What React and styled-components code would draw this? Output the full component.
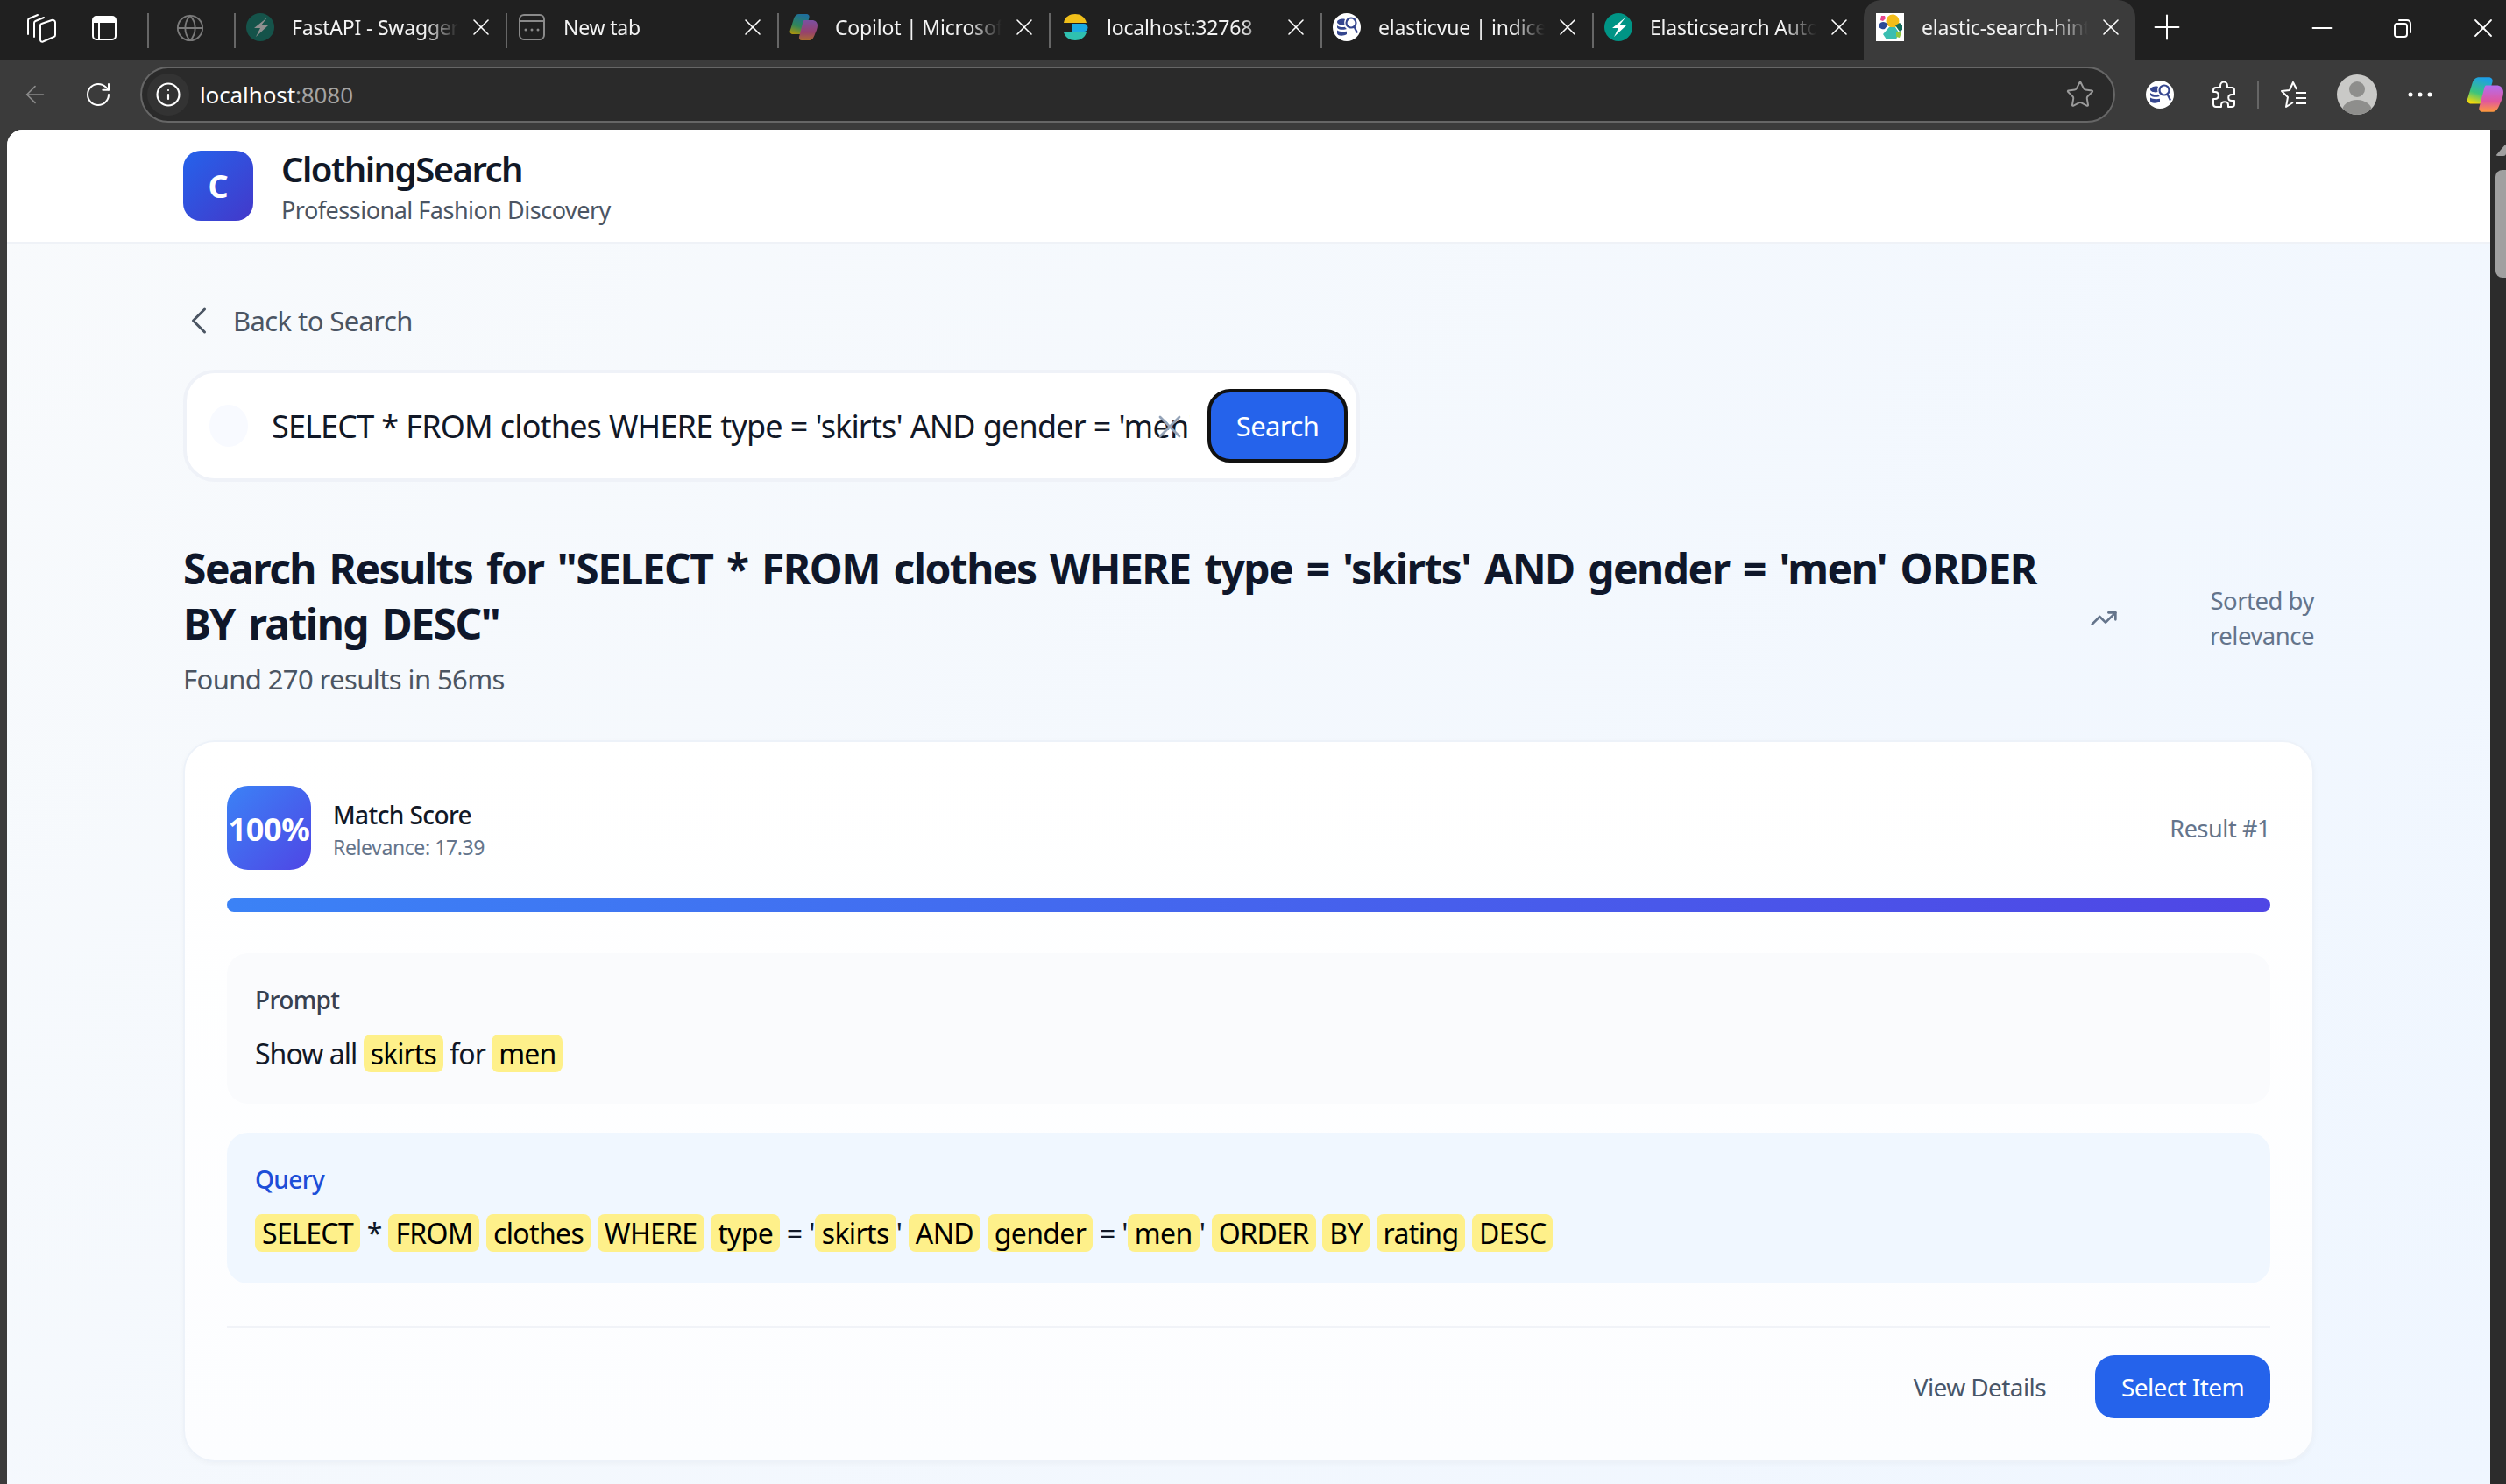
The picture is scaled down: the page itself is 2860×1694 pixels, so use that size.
import React from 'react';
import styled, { createGlobalStyle } from 'styled-components';
import { ArrowLeft, ChevronLeft, Globe, Info, Minus, Plus, RotateCw, Star, TrendingUp, X } from 'lucide-react';

const GlobalStyle = createGlobalStyle`
  html, body {
    margin: 0;
    padding: 0;
    background: #202020;
  }
  * {
    box-sizing: border-box;
  }
`;

const Shell = styled.div`
  width: 2860px;
  height: 1694px;
  overflow: hidden;
  display: flex;
  flex-direction: column;
  font-family: "Noto Sans", "Open Sans", sans-serif;
  background: #3b3b3b;
`;

/* browser tab strip */
const TabStrip = styled.div`
  height: 68px;
  flex: none;
  display: flex;
  align-items: stretch;
  padding-left: 11px;
  background: #202020;
`;

const StripSlot = styled.div`
  width: ${props => props.$width || 72}px;
  margin-right: ${props => props.$trail || 0}px;
  display: flex;
  align-items: center;
  justify-content: center;
  padding-bottom: 4px;
  color: ${props => props.$color || '#fff'};
`;

const StripDivider = styled.div`
  width: 2px;
  height: 40px;
  margin: 15px 0 0 13px;
  background: #666;
`;

const Tab = styled.div`
  position: relative;
  flex: none;
  width: 310px;
  display: flex;
  align-items: center;
  padding: 0 0 6px 14px;
  color: #f2f2f2;
  font-size: 23px;
  letter-spacing: -0.2px;
  background: ${props => (props.$active ? '#3b3b3b' : 'transparent')};
  border-radius: ${props => (props.$active ? '20px 20px 0 0' : '0')};

  &:first-of-type {
    width: 312px;
  }

  &::before {
    content: '';
    display: ${props => (props.$active ? 'none' : 'block')};
    position: absolute;
    left: 0;
    top: 15px;
    width: 2px;
    height: 40px;
    background: #666;
  }
`;

const TabIcon = styled.span`
  width: 32px;
  height: 32px;
  flex: none;
  display: flex;
`;

const TabTitle = styled.span`
  width: 190px;
  margin-left: 20px;
  flex: none;
  overflow: hidden;
  white-space: nowrap;
  -webkit-mask-image: linear-gradient(90deg, #000 80%, transparent 100%);
  mask-image: linear-gradient(90deg, #000 80%, transparent 100%);
`;

const TabClose = styled.span`
  display: flex;
  margin-left: 10px;
  color: #fff;
`;

const NewTab = styled.div`
  margin-left: 13px;
  display: flex;
  align-items: center;
  padding-bottom: 6px;
  color: #fff;
`;

const WindowControls = styled.div`
  margin-left: auto;
  padding: 0 8px 4px 0;
  display: flex;
  align-items: center;
  gap: 62px;
  color: #fff;
`;

/* address bar row */
const Toolbar = styled.div`
  height: 80px;
  flex: none;
  display: flex;
  align-items: center;
  padding-left: 24px;
  background: #3b3b3b;
`;

const NavIcon = styled.span`
  width: 32px;
  display: flex;
  margin-right: ${props => props.$gap}px;
  color: ${props => props.$color};
`;

const AddressBar = styled.div`
  flex: 1;
  height: 64px;
  margin-right: 15px;
  display: flex;
  align-items: center;
  padding: 0 21px 0 6px;
  border: 2px solid #666;
  border-radius: 32px;
  background: #2a2a2a;
`;

const SiteInfo = styled.span`
  width: 48px;
  height: 48px;
  flex: none;
  display: flex;
  align-items: center;
  justify-content: center;
  border-radius: 50%;
  background: #333;
  color: #fff;
`;

const Url = styled.span`
  margin-left: 12px;
  flex: 1;
  font-size: 26px;
  letter-spacing: -0.1px;
  color: #fff;
`;

const UrlPort = styled.span`
  color: #a3a3a3;
`;

const ToolIcons = styled.div`
  display: flex;
  align-items: center;
`;

const ToolSlot = styled.span`
  width: ${props => props.$width || 72}px;
  display: flex;
  justify-content: ${props => (props.$end ? 'flex-end' : 'center')};
  padding-right: ${props => (props.$end ? 3 : 0)}px;
  color: #fff;
`;

const ToolDivider = styled.span`
  width: 2px;
  height: 32px;
  margin: 0 4px 0 3px;
  background: #666;
`;

const Viewport = styled.div`
  flex: 1;
  min-height: 0;
  display: flex;
  padding-left: 8px;
`;

const Page = styled.div`
  flex: 1;
  overflow: hidden;
  border-top-left-radius: 18px;
  background: linear-gradient(135deg, #f8fafc 0%, #eff6ff 100%);
`;

const ScrollGutter = styled.div`
  width: 18px;
  flex: none;
  display: flex;
  flex-direction: column;
  align-items: flex-end;
  background: #2c2c2c;
`;

const ScrollArrow = styled.div`
  width: 12px;
  height: 14px;
  margin-top: 16px;
  overflow: hidden;
  background: #a0a0a0;
  clip-path: polygon(100% 0, 100% 100%, 0 100%);
  border-radius: 3px;
`;

const ScrollThumb = styled.div`
  width: 12px;
  height: 123px;
  margin-top: 16px;
  background: #a0a0a0;
  border-radius: 8px 0 0 8px;
`;

/* app header */
const AppHeader = styled.header`
  height: 130px;
  display: flex;
  align-items: center;
  border-bottom: 2px solid #eff2f7;
  background: #fff;
`;

const Container = styled.div`
  width: 2432px;
  margin: 0 auto;
`;

const Brand = styled.div`
  display: flex;
  align-items: center;
  gap: 32px;
`;

const Logo = styled.div`
  width: 80px;
  height: 80px;
  display: flex;
  align-items: center;
  justify-content: center;
  border-radius: 20px;
  background: linear-gradient(135deg, #2563eb, #4338ca);
  color: #fff;
  font-size: 36px;
  font-weight: 700;
`;

const BrandName = styled.div`
  margin-top: 4px;
  font-size: 40px;
  line-height: 48px;
  font-weight: 600;
  letter-spacing: -1.5px;
  color: #111827;
`;

const BrandTag = styled.div`
  margin-top: 4px;
  font-size: 27px;
  line-height: 38px;
  letter-spacing: -0.5px;
  color: #4b5563;
`;

/* results page */
const BackLink = styled.div`
  margin-top: 64px;
  height: 48px;
  display: flex;
  align-items: center;
  gap: 13px;
  font-size: 31px;
  letter-spacing: -0.6px;
  color: #4b5563;
`;

const BackChevron = styled.span`
  display: flex;
  margin-left: -8px;
`;

const SearchBox = styled.div`
  position: relative;
  width: 1343px;
  height: 128px;
  margin-top: 32px;
  display: flex;
  align-items: center;
  padding: 0 10px 0 26px;
  border: 4px solid #eff2f8;
  border-radius: 36px;
  background: #fff;
`;

const SearchGlyph = styled.span`
  width: 44px;
  height: 48px;
  flex: none;
  border-radius: 50%;
  background: #f8faff;
`;

const SearchText = styled.div`
  width: 1048px;
  margin-left: 27px;
  flex: none;
  overflow: hidden;
  white-space: nowrap;
  font-size: 36px;
  letter-spacing: -0.85px;
  word-spacing: 0.5px;
  color: #111827;
`;

const ClearIcon = styled.span`
  position: absolute;
  left: 1100px;
  top: 39px;
  display: flex;
  color: #94a3b8;
`;

const SearchButton = styled.button`
  width: 160px;
  height: 84px;
  margin-left: auto;
  flex: none;
  border: 4px solid #111;
  border-radius: 26px;
  background: #2563eb;
  color: #fff;
  font-family: inherit;
  font-size: 31px;
  letter-spacing: -0.6px;
`;

const ResultsHead = styled.div`
  margin-top: 67px;
  display: flex;
  align-items: center;
  justify-content: space-between;
`;

const HeadText = styled.div`
  width: 2140px;
`;

const ResultsTitle = styled.h2`
  margin: 0;
  font-size: 48px;
  line-height: 63px;
  font-weight: 700;
  letter-spacing: -1.55px;
  word-spacing: 4.6px;
  color: #0f172a;
`;

const ResultsMeta = styled.div`
  margin-top: 10px;
  font-size: 31px;
  line-height: 44px;
  letter-spacing: -0.6px;
  color: #4b5563;
`;

const SortInfo = styled.div`
  display: flex;
  align-items: center;
  gap: 64px;
  margin-top: -2px;
  color: #64748b;
`;

const SortLabel = styled.div`
  width: 160px;
  text-align: right;
  font-size: 27.5px;
  line-height: 40px;
  letter-spacing: -0.5px;
`;

const ResultCard = styled.article`
  margin-top: 48px;
  padding: 50px 48px 48px;
  border: 2px solid #edf2f9;
  border-radius: 36px;
  background: linear-gradient(180deg, #fff, #fcfdff);
  box-shadow: 0 2px 6px rgba(15, 23, 42, 0.03);
`;

const ScoreRow = styled.div`
  display: flex;
  align-items: center;
  justify-content: space-between;
`;

const ScoreLeft = styled.div`
  display: flex;
  align-items: center;
  gap: 25px;
`;

const ScoreBadge = styled.div`
  width: 96px;
  height: 96px;
  display: flex;
  align-items: center;
  justify-content: center;
  padding-top: 3px;
  border-radius: 24px;
  background: linear-gradient(135deg, #3b82f6, #4f46e5);
  color: #fff;
  font-size: 36px;
  font-weight: 700;
  letter-spacing: -0.3px;
`;

const ScoreText = styled.div`
  padding-top: 3px;
`;

const ScoreTitle = styled.div`
  font-size: 28px;
  line-height: 38px;
  font-weight: 500;
  letter-spacing: -0.6px;
  color: #111827;
`;

const ScoreSub = styled.div`
  margin-top: 2px;
  font-size: 23px;
  line-height: 32px;
  letter-spacing: -0.4px;
  color: #64748b;
`;

const ResultNumber = styled.div`
  font-size: 27px;
  letter-spacing: -0.4px;
  color: #64748b;
`;

const ScoreTrack = styled.div`
  height: 16px;
  margin-top: 32px;
  border-radius: 8px;
  overflow: hidden;
  background: #e5e7eb;
`;

const ScoreFill = styled.div`
  height: 100%;
  background: linear-gradient(90deg, #3b82f6, #4f46e5);
`;

const Panel = styled.section`
  height: 172px;
  margin-top: ${props => (props.$query ? 33 : 47)}px;
  padding: 30px 32px 32px;
  border-radius: 24px;
  background: ${props => (props.$query ? '#f0f7ff' : '#fafbfd')};
`;

const PanelLabel = styled.div`
  font-size: 28px;
  line-height: 46px;
  font-weight: 500;
  letter-spacing: -0.6px;
  color: ${props => (props.$query ? '#1d4ed8' : '#374151')};
`;

const PanelText = styled.div`
  margin-top: 15px;
  font-size: 32px;
  line-height: 48px;
  letter-spacing: ${props => (props.$query ? -0.65 : -0.95)}px;
  white-space: nowrap;
  color: #111827;
`;

const Hit = styled.mark`
  padding: 0 8px;
  border-radius: 8px;
  background: #fef08a;
  color: #000;
`;

const CardFooter = styled.div`
  margin-top: 49px;
  padding-top: 31px;
  display: flex;
  justify-content: flex-end;
  align-items: center;
  gap: 24px;
  border-top: 2px solid #f1f3f8;
`;

const GhostButton = styled.button`
  height: 72px;
  padding: 0 32px;
  border: 0;
  background: transparent;
  color: #475569;
  font-family: inherit;
  font-size: 28px;
  letter-spacing: -0.6px;
`;

const PrimaryButton = styled.button`
  width: 200px;
  height: 72px;
  border: 0;
  border-radius: 22px;
  background: #2563eb;
  color: #fff;
  font-family: inherit;
  font-size: 28px;
  letter-spacing: -0.6px;
`;

/* small drawings */
const WorkspacesIcon = () => (
  <svg width="34" height="34" viewBox="0 0 34 34" fill="none" stroke="#fff" strokeWidth="2">
    <path d="M2 24V8c0-1 .5-1.500 1.500-2L13 2" strokeLinecap="round" />
    <path d="M9 27V11c0-1 .5-1.500 1.500-2L20 5" strokeLinecap="round" />
    <path d="M16 14c0-1 .5-1.700 1.500-2L29 8c2-.6 4 .5 4 2.500V25c0 1-.5 1.700-1.500 2L19 32.500c-1.500.5-3-.2-3-2z" />
  </svg>
);

const VerticalTabsIcon = () => (
  <svg width="28" height="28" viewBox="0 0 28 28" fill="none">
    <rect x="1" y="1" width="26" height="26" rx="4" stroke="#fff" strokeWidth="2" />
    <path d="M1 8V5a4 4 0 0 1 4-4h18a4 4 0 0 1 4 4v3z" fill="#fff" />
    <path d="M8 8v19" stroke="#fff" strokeWidth="2" />
  </svg>
);

const RestoreIcon = () => (
  <svg width="24" height="24" viewBox="0 0 24 24" fill="none" stroke="#fff" strokeWidth="2">
    <rect x="3" y="7" width="14" height="15" rx="3" />
    <path d="M8 3h9a4 4 0 0 1 4 4v10" strokeLinecap="round" />
  </svg>
);

const FastApiIcon = ({ dim }) => (
  <svg width="32" height="32" viewBox="0 0 32 32">
    <circle cx="16" cy="16" r="16" fill={dim ? '#15534a' : '#009485'} />
    <path d="M24 5 9 17h7l-5 10 14-13h-8z" fill={dim ? '#8f8f8f' : '#fff'} />
  </svg>
);

const NewTabIcon = () => (
  <svg width="32" height="32" viewBox="0 0 32 32" fill="none" stroke="#8a8a8a" strokeWidth="2">
    <rect x="2" y="2" width="28" height="28" rx="5" />
    <path d="M2 9h28" />
    <path d="M9 19h.01M16 19h.01M23 19h.01" strokeWidth="3" strokeLinecap="round" />
  </svg>
);

const CopilotIcon = ({ dim, size = 32 }) => (
  <svg width={size} height={size} viewBox="0 0 32 32" opacity={dim ? 0.62 : 1}>
    <defs>
      <linearGradient id={dim ? 'cpa' : 'cpa2'} x1="0.6" y1="0" x2="0.3" y2="1">
        <stop offset="0" stopColor="#1e9fe8" />
        <stop offset="0.6" stopColor="#3cc47c" />
        <stop offset="1" stopColor="#f5d90a" />
      </linearGradient>
      <linearGradient id={dim ? 'cpb' : 'cpb2'} x1="0.5" y1="0" x2="0.5" y2="1">
        <stop offset="0" stopColor="#b36ef0" />
        <stop offset="0.6" stopColor="#e0569e" />
        <stop offset="1" stopColor="#ff9a3c" />
      </linearGradient>
    </defs>
    <path d="M11 1h8c3 0 4 2 3.500 4L18 21c-.6 2-2 3-4 3H4c-2.500 0-4-2-3.300-4L5 6c1-3 3-5 6-5z" fill={`url(#${dim ? 'cpa' : 'cpa2'})`} />
    <path d="M17 8h9c3 0 6 2 6 6 0 3-1.500 7-3 10-1 3-3 7-6 7h-9c-2.500 0-3.500-2-3-4l4-15c.5-2.500 1-4 2-4z" fill={`url(#${dim ? 'cpb' : 'cpb2'})`} />
  </svg>
);

const ElasticHqIcon = () => (
  <svg width="32" height="32" viewBox="0 0 32 32">
    <path d="M3 11C4 4 10 1 16 1s11 3 13 10z" fill="#f0bf1a" />
    <path d="M13 12h13a4 4 0 0 1 0 9H13z" fill="#1ba9e1" />
    <path d="M3 22h26c-2 6-7 9-13 9S5 28 3 22z" fill="#2fc0b0" />
  </svg>
);

const ElasticvueIcon = () => (
  <svg width="32" height="32" viewBox="0 0 32 32">
    <circle cx="16" cy="16" r="16" fill="#fff" />
    <path d="M5 10c0-2 3.500-3.500 7-3.500 1.500 0 2 .5 2 .5-1 2-1 4-.5 6-3 1-8.500 0-8.500-3zM5 14c2 2 6 2.500 9 1.800.5 1 1 1.500 2 2.200-3 1.500-11 1-11-2zM5 19.500c2.500 1.800 7 2 11 1.300V24c-1.500 1.200-4 1.700-6 1.700-3 0-5-1.200-5-2.700z" fill="#35468f" />
    <circle cx="21" cy="11" r="5.500" fill="none" stroke="#35468f" strokeWidth="2.200" />
    <path d="m24.500 15.500 3.500 7" stroke="#35468f" strokeWidth="2.200" />
  </svg>
);

const HintFavicon = () => (
  <svg width="32" height="32" viewBox="0 0 32 32">
    <rect width="32" height="32" fill="#fff" />
    <circle cx="19" cy="9" r="7.500" fill="#f4bd19" />
    <path d="M6 3h4l1 3-3 3-3-1z" fill="#e8478f" />
    <path d="M5 11c3-2 6-1 9 2l-4 5c-3 1-7-1-7-4z" fill="#2c4a97" />
    <path d="M15 16h7l4 6-3 8H12l-4-6z" fill="#3abeb1" />
    <path d="M22 14l5-3 3 3v5l-3 2z" fill="#136b5b" />
    <path d="M23 22h6l-2 6-4-1z" fill="#8dc63f" />
  </svg>
);

const ExtensionIcon = () => (
  <svg width="30" height="32" viewBox="0 0 30 32" fill="none" stroke="#fff" strokeWidth="2" strokeLinejoin="round">
    <path d="M12 6c0-6 8-6 8 0v2h5c1.500 0 3 1 3 3v5h-3c-5 0-5 7 0 7h3v4c0 2-1.500 3-3 3h-4v-2c0-5-8-5-8 0v2H7c-2 0-3-1.500-3-3v-6h2c5 0 5-8 0-8H4v-2c0-2 1-3 3-3h5z" />
  </svg>
);

const FavoritesIcon = () => (
  <svg width="32" height="32" viewBox="0 0 32 32" fill="none" stroke="#fff" strokeWidth="2" strokeLinejoin="round">
    <path d="M19 10 15 2l-4 9-9 1 7 7-2 11 8-5" />
    <path d="M18 14h12M18 20h12M18 26h12" />
  </svg>
);

const EllipsisIcon = () => (
  <svg width="30" height="8" viewBox="0 0 30 8" fill="#fff">
    <circle cx="4" cy="4" r="2.500" />
    <circle cx="15" cy="4" r="2.500" />
    <circle cx="26" cy="4" r="2.500" />
  </svg>
);

const AvatarIcon = () => (
  <svg width="46" height="46" viewBox="0 0 46 46">
    <defs>
      <clipPath id="avatar-clip">
        <circle cx="23" cy="23" r="23" />
      </clipPath>
    </defs>
    <circle cx="23" cy="23" r="23" fill="#c9c9c7" />
    <g clipPath="url(#avatar-clip)" fill="#8e8e8c">
      <circle cx="23" cy="17" r="9" />
      <ellipse cx="23" cy="42" rx="17" ry="13" />
    </g>
  </svg>
);

const tabs = [
  { title: 'FastAPI - Swagger UI', icon: <FastApiIcon dim /> },
  { title: 'New tab', icon: <NewTabIcon /> },
  { title: 'Copilot | Microsoft', icon: <CopilotIcon dim /> },
  { title: 'localhost:32768', icon: <ElasticHqIcon /> },
  { title: 'elasticvue | indices', icon: <ElasticvueIcon /> },
  { title: 'Elasticsearch Autocomplete', icon: <FastApiIcon /> },
  { title: 'elastic-search-hints', icon: <HintFavicon />, active: true },
];

const QUERY = "SELECT * FROM clothes WHERE type = 'skirts' AND gender = 'men' ORDER BY rating DESC";

const App = () => (
  <Shell>
    <GlobalStyle />
    <TabStrip>
      <StripSlot><WorkspacesIcon /></StripSlot>
      <StripSlot><VerticalTabsIcon /></StripSlot>
      <StripDivider />
      <StripSlot $width={94} $trail={3} $color="#7a7a7a"><Globe size={34} strokeWidth={1.3} /></StripSlot>
      {tabs.map(tab => (
        <Tab key={tab.title} $active={tab.active}>
          <TabIcon>{tab.icon}</TabIcon>
          <TabTitle>{tab.title}</TabTitle>
          <TabClose><X size={32} strokeWidth={1.2} /></TabClose>
        </Tab>
      ))}
      <NewTab><Plus size={46} strokeWidth={1.05} /></NewTab>
      <WindowControls>
        <Minus size={36} strokeWidth={1.2} />
        <RestoreIcon />
        <X size={36} strokeWidth={1.2} />
      </WindowControls>
    </TabStrip>

    <Toolbar>
      <NavIcon $gap={40} $color="#8a8a8a"><ArrowLeft size={38} strokeWidth={1.3} /></NavIcon>
      <NavIcon $gap={32} $color="#fff"><RotateCw size={36} strokeWidth={1.5} /></NavIcon>
      <AddressBar>
        <SiteInfo><Info size={30} strokeWidth={1.7} /></SiteInfo>
        <Url>localhost<UrlPort>:8080</UrlPort></Url>
        <Star size={34} strokeWidth={1.4} color="#9a9a9a" />
      </AddressBar>
      <ToolIcons>
        <ToolSlot><ElasticvueIcon /></ToolSlot>
        <ToolSlot><ExtensionIcon /></ToolSlot>
        <ToolDivider />
        <ToolSlot><FavoritesIcon /></ToolSlot>
        <ToolSlot><AvatarIcon /></ToolSlot>
        <ToolSlot><EllipsisIcon /></ToolSlot>
        <ToolSlot $width={62} $end><CopilotIcon size={42} /></ToolSlot>
      </ToolIcons>
    </Toolbar>

    <Viewport>
      <Page>
        <AppHeader>
          <Container>
            <Brand>
              <Logo>C</Logo>
              <div>
                <BrandName>ClothingSearch</BrandName>
                <BrandTag>Professional Fashion Discovery</BrandTag>
              </div>
            </Brand>
          </Container>
        </AppHeader>

        <Container>
          <BackLink>
            <BackChevron><ChevronLeft size={52} strokeWidth={1.4} /></BackChevron>
            Back to Search
          </BackLink>

          <SearchBox>
            <SearchGlyph />
            <SearchText>{QUERY}</SearchText>
            <ClearIcon><X size={44} strokeWidth={1.5} /></ClearIcon>
            <SearchButton>Search</SearchButton>
          </SearchBox>

          <ResultsHead>
            <HeadText>
              <ResultsTitle>Search Results for "{QUERY}"</ResultsTitle>
              <ResultsMeta>Found 270 results in 56ms</ResultsMeta>
            </HeadText>
            <SortInfo>
              <TrendingUp size={32} strokeWidth={2} />
              <SortLabel>Sorted by relevance</SortLabel>
            </SortInfo>
          </ResultsHead>

          <ResultCard>
            <ScoreRow>
              <ScoreLeft>
                <ScoreBadge>100%</ScoreBadge>
                <ScoreText>
                  <ScoreTitle>Match Score</ScoreTitle>
                  <ScoreSub>Relevance: 17.39</ScoreSub>
                </ScoreText>
              </ScoreLeft>
              <ResultNumber>Result #1</ResultNumber>
            </ScoreRow>

            <ScoreTrack>
              <ScoreFill style={{ width: '100%' }} />
            </ScoreTrack>

            <Panel>
              <PanelLabel>Prompt</PanelLabel>
              <PanelText>
                Show all <Hit>skirts</Hit> for <Hit>men</Hit>
              </PanelText>
            </Panel>

            <Panel $query>
              <PanelLabel $query>Query</PanelLabel>
              <PanelText $query>
                <Hit>SELECT</Hit> * <Hit>FROM</Hit> <Hit>clothes</Hit> <Hit>WHERE</Hit> <Hit>type</Hit> = '<Hit>skirts</Hit>' <Hit>AND</Hit> <Hit>gender</Hit> = '<Hit>men</Hit>' <Hit>ORDER</Hit> <Hit>BY</Hit> <Hit>rating</Hit> <Hit>DESC</Hit>
              </PanelText>
            </Panel>

            <CardFooter>
              <GhostButton>View Details</GhostButton>
              <PrimaryButton>Select Item</PrimaryButton>
            </CardFooter>
          </ResultCard>
        </Container>
      </Page>
      <ScrollGutter>
        <ScrollArrow />
        <ScrollThumb />
      </ScrollGutter>
    </Viewport>
  </Shell>
);

export default App;
